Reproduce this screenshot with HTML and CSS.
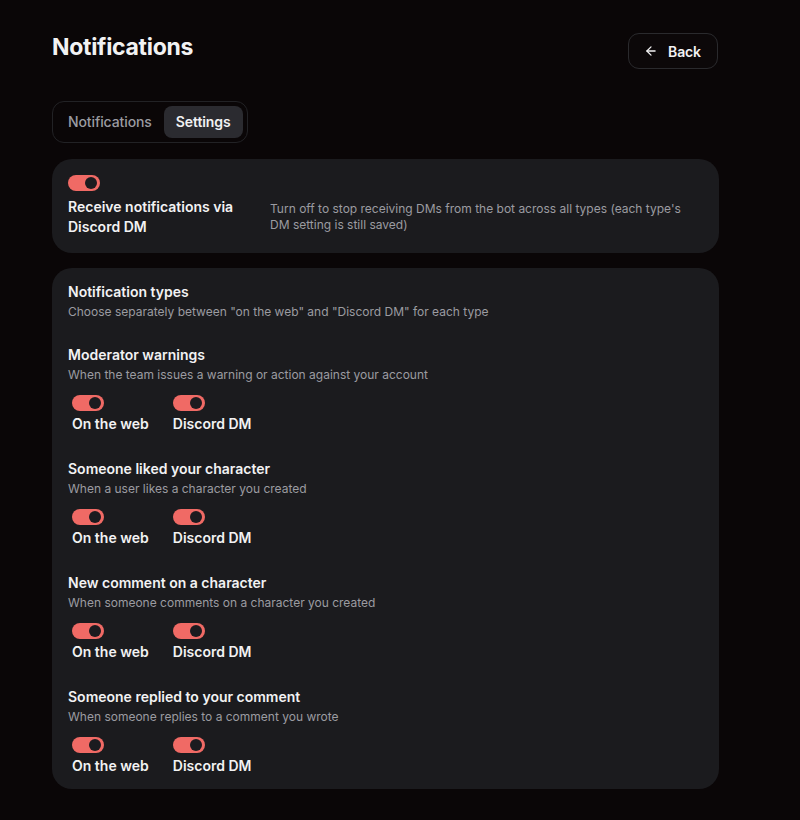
FILE: index.html
```html
<!DOCTYPE html>
<html lang="en">
<head>
  <meta charset="UTF-8" />
  <meta name="viewport" content="width=device-width, initial-scale=1.0"/>
  <title>Notifications</title>
  <link rel="stylesheet" href="styles.css">
</head>
<body>

  <div class="page">
    <div class="header">
      <h1>Notifications</h1>
      <button class="back-btn">
        <svg width="14" height="14" viewBox="0 0 24 24" fill="none" stroke="currentColor" stroke-width="2.2" stroke-linecap="round" stroke-linejoin="round"><path d="M19 12H5"/><path d="M12 19l-7-7 7-7"/></svg>
        Back
      </button>
    </div>

    <!-- Tabs -->
    <div class="tabs">
      <div class="tab">Notifications</div>
      <div class="tab active">Settings</div>
    </div>

    <!-- Global DM switch -->
    <div class="card dm-card">
      <span class="switch on"></span>
      <div class="dm-row">
        <div class="dm-title">Receive notifications via Discord DM</div>
        <div class="desc">Turn off to stop receiving DMs from the bot across all types (each type's DM setting is still saved)</div>
      </div>
    </div>

    <!-- Per-type settings -->
    <div class="card types">
      <div class="group intro">
        <div class="title">Notification types</div>
        <div class="desc">Choose separately between "on the web" and "Discord DM" for each type</div>
      </div>

      <div class="group">
        <div class="title">Moderator warnings</div>
        <div class="desc">When the team issues a warning or action against your account</div>
        <div class="options">
          <label class="option"><span class="switch on"></span>On the web</label>
          <label class="option"><span class="switch on"></span>Discord DM</label>
        </div>
      </div>

      <div class="group">
        <div class="title">Someone liked your character</div>
        <div class="desc">When a user likes a character you created</div>
        <div class="options">
          <label class="option"><span class="switch on"></span>On the web</label>
          <label class="option"><span class="switch on"></span>Discord DM</label>
        </div>
      </div>

      <div class="group">
        <div class="title">New comment on a character</div>
        <div class="desc">When someone comments on a character you created</div>
        <div class="options">
          <label class="option"><span class="switch on"></span>On the web</label>
          <label class="option"><span class="switch on"></span>Discord DM</label>
        </div>
      </div>

      <div class="group">
        <div class="title">Someone replied to your comment</div>
        <div class="desc">When someone replies to a comment you wrote</div>
        <div class="options">
          <label class="option"><span class="switch on"></span>On the web</label>
          <label class="option"><span class="switch on"></span>Discord DM</label>
        </div>
      </div>
    </div>
  </div>

</body>
</html>
```

FILE: styles.css
```css
body {
  margin: 0;
  padding: 0;
  background: #0a0607;
  color: #f2f2f3;
  font-family: 'Inter', 'Noto Sans', sans-serif;
}
.page {
  width: 667px;
  padding: 33px 0 32px 52px;
}
.header {
  display: flex;
  justify-content: space-between;
  align-items: flex-start;
  height: 37px;
  margin-bottom: 31px;
}
h1 {
  margin: 0;
  font-size: 23px;
  font-weight: 700;
  line-height: 37px;
  letter-spacing: -0.3px;
  position: relative;
  top: -4px;
}
.back-btn {
  display: flex;
  align-items: center;
  gap: 10px;
  height: 36px;
  padding: 0 16px 0 15px;
  margin-right: 1px;
  background: #0c0809;
  color: #f2f2f3;
  border: 1px solid #2a2a2d;
  border-radius: 11px;
  font-family: inherit;
  font-size: 14px;
  font-weight: 600;
  letter-spacing: -0.1px;
}
.tabs {
  display: inline-flex;
  padding: 4px;
  border: 1px solid #222225;
  border-radius: 12px;
  margin-bottom: 16px;
}
.tab {
  padding: 0 12px 0 11px;
  height: 32px;
  line-height: 32px;
  font-size: 14px;
  font-weight: 500;
  letter-spacing: -0.1px;
  color: #9b9ba1;
  border-radius: 8px;
}
.tab.active {
  padding: 0 12px;
  background: #2b2b30;
  color: #f2f2f3;
  font-weight: 600;
}
.card {
  background: #1b1b1e;
  border-radius: 20px;
  padding: 16px;
}
.dm-card {
  margin-bottom: 15px;
}
.switch {
  display: block;
  position: relative;
  width: 32px;
  height: 16px;
  border-radius: 8px;
  background: #f06a65;
}
.switch::after {
  content: "";
  position: absolute;
  top: 2px;
  right: 3px;
  width: 12px;
  height: 12px;
  border-radius: 50%;
  background: #1c1b1f;
}
.dm-row {
  display: flex;
  align-items: center;
  gap: 16px;
  margin-top: 6px;
}
.dm-title {
  width: 186px;
  flex-shrink: 0;
  font-size: 14px;
  font-weight: 600;
  line-height: 20px;
}
.desc {
  font-size: 12px;
  line-height: 16px;
  color: #9b9ba1;
}
.types {
  padding-top: 14px;
  padding-bottom: 9px;
}
.group .desc {
  margin-top: 2px;
}
.group + .group {
  margin-top: 21px;
}
.group.intro + .group {
  margin-top: 25px;
}
.title {
  font-size: 14px;
  font-weight: 600;
  line-height: 20px;
}
.options {
  display: flex;
  gap: 16px;
  margin-top: 8px;
}
.option {
  display: flex;
  flex-direction: column;
  gap: 3px;
  padding: 4px;
  font-size: 14px;
  font-weight: 600;
  line-height: 20px;
}
```
